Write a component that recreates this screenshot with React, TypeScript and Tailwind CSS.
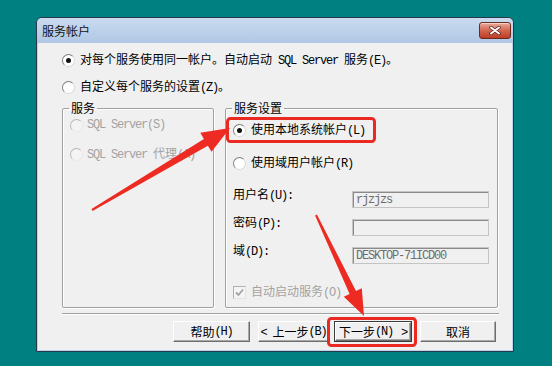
import React from "react";

const mono = "font-['Liberation_Mono',monospace] text-[12px] tracking-[-1.2px]";

function M({ children }: { children: React.ReactNode }) {
  return <span className={mono}>{children}</span>;
}

function Radio({ checked = false, disabled = false }: { checked?: boolean; disabled?: boolean }) {
  return (
    <span
      className={`flex h-[13px] w-[13px] shrink-0 items-center justify-center rounded-full border ${
        disabled
          ? "border-t-[#b8b8b8] border-l-[#b8b8b8] border-b-[#e8e8e8] border-r-[#e8e8e8] bg-[#f4f4f4]"
          : "border-t-[#7f7f7f] border-l-[#7f7f7f] border-b-[#d8d8d8] border-r-[#d8d8d8] bg-white"
      }`}
    >
      {checked && <span className="h-[5px] w-[5px] rounded-full bg-[#111]" />}
    </span>
  );
}

function Field({ value }: { value?: string }) {
  return (
    <div className="mt-[5px] flex h-[17px] w-[137px] items-center border border-[#c4c4c4] bg-[#f0f0f0] pl-[3px] text-[#6d6d6d] shadow-[inset_1px_1px_0_#8a8a8a]">
      <span className={mono}>{value}</span>
    </div>
  );
}

function Button({ children, width, main = false }: { children: React.ReactNode; width: string; main?: boolean }) {
  return (
    <div className={`${width} h-[21px] ${main ? "border border-[#3c3c3c]" : ""}`}>
      <div className="flex h-full w-full items-center justify-center border border-t-white border-l-white border-r-[#6e6e6e] border-b-[#6e6e6e] bg-[#f0f0f0] leading-[16px] shadow-[inset_-1px_-1px_0_#a8a8a8]">
        {children}
      </div>
    </div>
  );
}

export default function App() {
  return (
    <div className="relative h-[366px] w-[552px] overflow-hidden bg-[#008080] pl-[36px] pt-[17px] font-['Noto_Sans_CJK_SC',sans-serif] text-[12px] text-black">
      {/* dialog window */}
      <div className="flex h-[335px] w-[478px] flex-col rounded-t-[6px] border border-[#26384a] bg-[#bcd1ea]">
        <div className="flex h-[25px] items-center justify-between rounded-t-[5px] bg-linear-to-b from-[#cadbef] to-[#b0c7e5] pl-[5px] pr-[2px] text-[12px] text-[#141414]">
          <span>服务帐户</span>
          <div className="flex h-[17px] w-[32px] items-center justify-center rounded-[3px] border border-[#6e2a1d] bg-linear-to-b from-[#e8aa9b] via-[#d26650] to-[#bd3b26] shadow-[inset_0_1px_0_#f3cfc6]">
            <svg width="12" height="9" viewBox="0 0 12 9">
              <path d="M2 1.5 L10 7.5 M10 1.5 L2 7.5" stroke="#5a2018" strokeWidth="3.4" strokeLinecap="round" />
              <path d="M2 1.5 L10 7.5 M10 1.5 L2 7.5" stroke="#fff" strokeWidth="2" strokeLinecap="round" />
            </svg>
          </div>
        </div>

        <div className="mx-[1px] mb-[1px] flex flex-1 flex-col bg-[#f0f0f0] pl-[24px] pr-[13px] pt-[9px]">
          <div className="flex h-[16px] items-center gap-[5px] leading-[16px]">
            <Radio checked />
            <span className="whitespace-pre">
              对每个服务使用同一帐户。自动启动<M> SQL Server </M>服务<M>(E)</M>。
            </span>
          </div>
          <div className="mt-[11px] flex h-[16px] items-center gap-[5px] leading-[16px]">
            <Radio />
            <span>
              自定义每个服务的设置<M>(Z)</M>。
            </span>
          </div>

          <div className="mt-[5px] flex h-[208px] gap-[11px]">
            <fieldset className="h-[208px] w-[152px] overflow-hidden rounded-[2px] border border-[#a0a0a0] pl-[7px] pt-[1px] shadow-[1px_1px_0_#fff,inset_1px_1px_0_#fff]">
              <legend className="ml-[-1px] px-[2px] leading-[16px]">服务</legend>
              <div className="flex h-[16px] items-center gap-[4px] whitespace-pre text-[#a3a3a3]">
                <Radio disabled />
                <M>SQL Server(S)</M>
              </div>
              <div className="mt-[13px] flex h-[16px] items-center gap-[4px] whitespace-pre text-[#a3a3a3]">
                <Radio disabled />
                <span>
                  <M>SQL Server </M>代理<M>(A)</M>
                </span>
              </div>
            </fieldset>

            <fieldset className="h-[208px] w-[273px] rounded-[2px] border border-[#a0a0a0] pl-[7px] pt-[6px] shadow-[1px_1px_0_#fff,inset_1px_1px_0_#fff]">
              <legend className="ml-[-1px] px-[2px] leading-[16px]">服务设置</legend>
              <div className="flex h-[16px] items-center gap-[5px]">
                <Radio checked />
                <span>
                  使用本地系统帐户<M>(L)</M>
                </span>
              </div>
              <div className="mt-[17px] flex h-[16px] items-center gap-[5px]">
                <Radio />
                <span>
                  使用域用户帐户<M>(R)</M>
                </span>
              </div>

              <div className="mt-[15px] flex h-[28px] items-start">
                <span className="w-[119px] leading-[16px]">
                  用户名<M>(U):</M>
                </span>
                <Field value="rjzjzs" />
              </div>
              <div className="flex h-[28px] items-start">
                <span className="w-[119px] leading-[16px]">
                  密码<M>(P):</M>
                </span>
                <Field />
              </div>
              <div className="flex h-[28px] items-start">
                <span className="w-[119px] leading-[16px]">
                  域<M>(D):</M>
                </span>
                <Field value="DESKTOP-71ICD00" />
              </div>

              <div className="mt-[14px] flex h-[16px] items-center gap-[5px] text-[#a3a3a3]">
                <span className="flex h-[13px] w-[13px] items-center justify-center border border-t-[#b0b0b0] border-l-[#b0b0b0] border-b-[#e4e4e4] border-r-[#e4e4e4] bg-[#f4f4f4]">
                  <svg width="9" height="9" viewBox="0 0 9 9">
                    <path d="M1 4.5 L3.5 7 L8 1.5" fill="none" stroke="#a3a3a3" strokeWidth="1.8" />
                  </svg>
                </span>
                <span>
                  自动启动服务<M>(O)</M>
                </span>
              </div>
            </fieldset>
          </div>

          <div className="mt-[5px] h-[1px] bg-[#a0a0a0]" />
          <div className="h-[1px] bg-white" />

          <div className="mt-[6px] flex justify-end pr-[3px]">
            <Button width="w-[77px]">
              帮助<M>(H)</M>
            </Button>
            <div className="ml-[8px]">
              <Button width="w-[71px]">
                <span className="mr-[6px]">
                  <M>&lt;</M>
                </span>
                上一步<M>(B)</M>
              </Button>
            </div>
            <div className="ml-[5px]">
              <Button width="w-[78px]" main>
                下一步<M>(N)</M>
                <span className="ml-[8px]">
                  <M>&gt;</M>
                </span>
              </Button>
            </div>
            <div className="ml-[8px]">
              <Button width="w-[76px]">取消</Button>
            </div>
          </div>
        </div>
      </div>

      {/* red annotations */}
      <svg className="pointer-events-none absolute left-0 top-0" width="552" height="366">
        <rect x="227.5" y="118.5" width="147" height="23" rx="3" fill="none" stroke="#ea2a22" strokeWidth="3" />
        <rect x="328.5" y="318.5" width="87" height="27" rx="3" fill="none" stroke="#ea2a22" strokeWidth="3" />
        <polygon
          points="91.5,209.1 203.9,138.9 200.3,132.8 230,128 211.5,151.8 207.9,145.7 92.5,210.9"
          fill="#ee2b22"
        />
        <polygon
          points="316.9,214.6 356,291 361.8,288.2 364,316 343.8,296.8 349.6,294 315.1,215.4"
          fill="#ee2b22"
        />
      </svg>
    </div>
  );
}
